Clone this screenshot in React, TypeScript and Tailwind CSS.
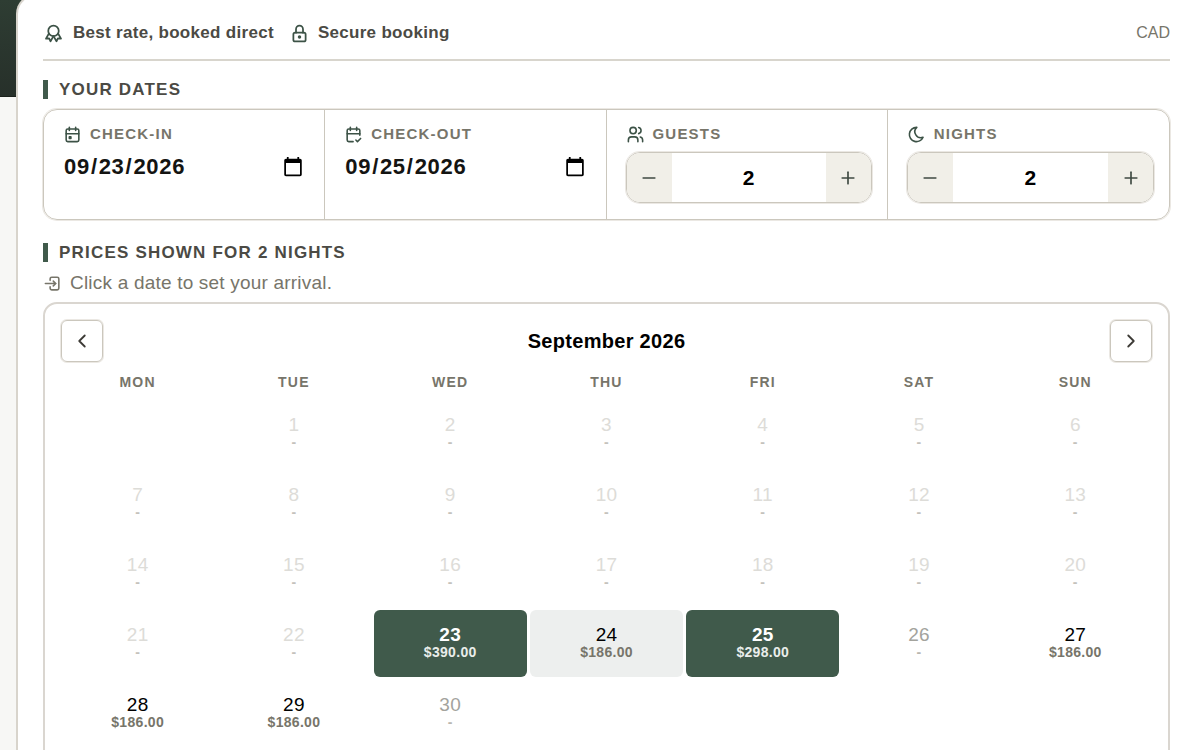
import React, { useState } from 'react';
import {
  TbAward,
  TbCalendarCheck,
  TbCalendarEvent,
  TbChevronLeft,
  TbChevronRight,
  TbLock,
  TbLogin2,
  TbMinus,
  TbMoon,
  TbPlus,
  TbUsers } from
'react-icons/tb';

const weekdays = ['Mon', 'Tue', 'Wed', 'Thu', 'Fri', 'Sat', 'Sun'];

const prices: Record<number, string> = {
  23: '$390.00',
  24: '$186.00',
  25: '$298.00',
  27: '$186.00',
  28: '$186.00',
  29: '$186.00'
};

const TODAY = 23;
const days = Array.from({ length: 30 }, (_, i) => i + 1);

function SectionTitle({ children }: { children: React.ReactNode }) {
  return (
    <h2 className="border-l-[5px] border-[#405a4b] pl-[11px] text-[17px] leading-[19px] font-bold uppercase tracking-[1.2px] text-[#4b4a44]">
      {children}
    </h2>);

}

function FieldLabel({ htmlFor, icon, children }: { htmlFor: string; icon: React.ReactNode; children: React.ReactNode }) {
  return (
    <label
      htmlFor={htmlFor}
      className="flex items-center gap-2 text-[15px] leading-5 font-bold uppercase tracking-[1.2px] text-[#77756a]">
      <span className="text-[#3c5246]">{icon}</span>
      {children}
    </label>);

}

function Stepper({ id, name }: { id: string; name: string }) {
  const [value, setValue] = useState(2);
  return (
    <div className="mt-2 flex h-[51px] overflow-hidden rounded-[14px] border border-[#cbc7bd] ring-1 ring-[#ebe8e3]">
      <button
        type="button"
        aria-label={`Fewer ${name}`}
        onClick={() => setValue(Math.max(1, value - 1))}
        className="flex w-[45px] shrink-0 items-center justify-center bg-[#f1efe8] text-[#3f4a42]">
        <TbMinus className="w-5 h-5" />
      </button>
      <input
        id={id}
        type="text"
        inputMode="numeric"
        value={value}
        onChange={(e) => setValue(Number(e.target.value) || 1)}
        className="min-w-0 flex-1 text-center text-[21px] font-bold text-black focus:outline-none" />
      <button
        type="button"
        aria-label={`More ${name}`}
        onClick={() => setValue(value + 1)}
        className="flex w-[45px] shrink-0 items-center justify-center bg-[#f1efe8] text-[#3f4a42]">
        <TbPlus className="w-5 h-5" />
      </button>
    </div>);

}

function Day({ day }: { day: number }) {
  const price = prices[day];
  const past = day < TODAY;
  const edge = day === 23 || day === 25;
  const between = day === 24;

  let box = '';
  let number = 'text-black';
  let amount = 'text-[#77756a]';
  if (edge) {
    box = 'bg-[#405a4b]';
    number = 'font-bold text-white';
    amount = 'text-[#e9edea]';
  } else if (between) {
    box = 'bg-[#edefee]';
  } else if (past) {
    number = 'text-[#dddcd8]';
    amount = 'text-[#c4c2bc]';
  } else if (!price) {
    number = 'text-[#a3a39d]';
    amount = 'text-[#b9b7b0]';
  }

  return (
    <button
      type="button"
      disabled={!price}
      className={`flex h-[67px] flex-col items-center justify-center rounded-md ${box}`}>
      <span className={`text-[19px] leading-[18px] tracking-[0.3px] ${number}`}>{day}</span>
      <span className={`text-[14px] leading-[17px] font-bold tracking-[0.3px] ${amount}`}>
        {price ?? '-'}
      </span>
    </button>);

}

const dateCell = 'pt-[14px] pb-4 pl-[19px] pr-[18px]';
const stepperCell = 'pt-[14px] pb-4 pl-[19px] pr-[15px]';
const dateInput =
'mt-[9px] block w-full text-[22px] leading-7 font-bold tracking-[0.7px] text-[#141412] focus:outline-none';
const navButton =
'flex h-[42px] w-[42px] items-center justify-center rounded-md border border-[#cbc7bd] ring-1 ring-[#ebe8e3] text-[#3d3b36]';

export default function App() {
  return (
    <div className="flex min-h-screen flex-col overflow-hidden bg-[#f7f7f5] font-['Liberation_Sans',Arial,sans-serif]">
      <div className="h-[97px] shrink-0 border-b border-[#1b211c] bg-linear-to-b from-[#2e3d33] to-[#27302a]" />

      <main className="-mt-[103px] ml-4 flex-1 rounded-tl-[20px] border-2 border-r-0 border-[#d8d4cc] bg-white pt-6 pl-[25px] pr-[30px] pb-6">
        <div className="flex items-center justify-between border-b-2 border-[#d8d5cd] pt-px pb-[14px]">
          <div className="flex items-center gap-[15px] text-[17px] leading-6 font-bold tracking-[0.3px] text-[#4b4a44]">
            <span className="flex items-center gap-[9px]">
              <TbAward className="w-[21px] h-[21px] text-[#3c5246]" />
              Best rate, booked direct
            </span>
            <span className="flex items-center gap-2">
              <TbLock className="w-[21px] h-[21px] text-[#3c5246]" />
              Secure booking
            </span>
          </div>
          <span className="text-[16px] leading-6 text-[#77756a]">CAD</span>
        </div>

        <section className="mt-[19px]">
          <SectionTitle>Your dates</SectionTitle>
          <div className="mt-[10px] grid grid-cols-4 divide-x divide-[#cbc7bd] rounded-[14px] border border-[#cbc7bd] ring-1 ring-[#ebe8e3]">
            <div className={dateCell}>
              <FieldLabel htmlFor="check-in" icon={<TbCalendarEvent className="w-[19px] h-[19px]" />}>
                Check-in
              </FieldLabel>
              <input id="check-in" type="date" defaultValue="2026-09-23" className={dateInput} />
            </div>
            <div className={dateCell}>
              <FieldLabel htmlFor="check-out" icon={<TbCalendarCheck className="w-[19px] h-[19px]" />}>
                Check-out
              </FieldLabel>
              <input id="check-out" type="date" defaultValue="2026-09-25" className={dateInput} />
            </div>
            <div className={stepperCell}>
              <FieldLabel htmlFor="guests" icon={<TbUsers className="w-[19px] h-[19px]" />}>
                Guests
              </FieldLabel>
              <Stepper id="guests" name="guests" />
            </div>
            <div className={stepperCell}>
              <FieldLabel htmlFor="nights" icon={<TbMoon className="w-[19px] h-[19px]" />}>
                Nights
              </FieldLabel>
              <Stepper id="nights" name="nights" />
            </div>
          </div>
        </section>

        <section className="mt-[23px]">
          <SectionTitle>Prices shown for 2 nights</SectionTitle>
          <p className="mt-[9px] flex items-center gap-2 text-[19px] leading-6 tracking-[0.2px] text-[#77756a]">
            <TbLogin2 className="w-[19px] h-[19px]" />
            Click a date to set your arrival.
          </p>

          <div className="mt-[7px] rounded-[14px] border-2 border-[#dad6d0] p-4">
            <div className="flex items-center justify-between">
              <button type="button" aria-label="Previous month" className={navButton}>
                <TbChevronLeft className="w-[22px] h-[22px]" />
              </button>
              <h3 className="text-[20px] leading-7 font-bold tracking-[0.3px] text-black">September 2026</h3>
              <button type="button" aria-label="Next month" className={navButton}>
                <TbChevronRight className="w-[22px] h-[22px]" />
              </button>
            </div>

            <div className="mt-[10px] grid grid-cols-7 gap-x-[3px] text-center text-[14px] leading-5 font-bold uppercase tracking-[1.2px] text-[#77756a]">
              {weekdays.map((weekday) =>
              <span key={weekday}>{weekday}</span>
              )}
            </div>

            <div className="mt-2 grid grid-cols-7 gap-[3px]">
              <span />
              {days.map((day) =>
              <Day key={day} day={day} />
              )}
            </div>
          </div>
        </section>
      </main>
    </div>);

}
